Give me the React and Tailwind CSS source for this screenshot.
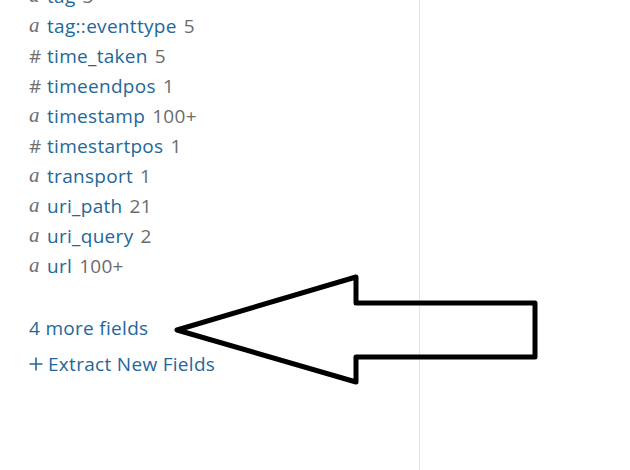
const fields = [
  { type: "a", name: "tag", count: "3" },
  { type: "a", name: "tag::eventtype", count: "5" },
  { type: "#", name: "time_taken", count: "5" },
  { type: "#", name: "timeendpos", count: "1" },
  { type: "a", name: "timestamp", count: "100+" },
  { type: "#", name: "timestartpos", count: "1" },
  { type: "a", name: "transport", count: "1" },
  { type: "a", name: "uri_path", count: "21" },
  { type: "a", name: "uri_query", count: "2" },
  { type: "a", name: "url", count: "100+" },
];

function TypeIcon({ type }) {
  if (type === "a") {
    return (
      <span className="inline-block w-[18px] text-[21px] italic text-[#6f6f6f] [font-family:'Liberation_Serif',serif]">
        a
      </span>
    );
  }
  return <span className="inline-block w-[18px] text-[#6f6f6f]">#</span>;
}

function Arrow() {
  return (
    <svg className="pointer-events-none absolute left-0 top-0" width="630" height="470">
      <polygon
        points="177,330 356,277 356,303 535,303 535,357 356,357 356,382"
        fill="none"
        stroke="#000"
        strokeWidth="5"
        strokeLinejoin="round"
      />
    </svg>
  );
}

export default function App() {
  return (
    <div className="relative h-[470px] w-[630px] overflow-hidden bg-white [font-family:'Open_Sans',sans-serif]">
      <div className="flex h-full">
        <div className="h-full w-[420px] border-r border-[#e3e3e3] pl-[29px]">
          <ul className="-mt-[19px] text-[19px] tracking-[0.3px]">
            {fields.map((f) => (
              <li key={f.name} className="flex h-[30px] items-center">
                <TypeIcon type={f.type} />
                <span className="text-[#23679a]">{f.name}</span>
                <span className="ml-[7px] text-[#6b6b6b]">{f.count}</span>
              </li>
            ))}
          </ul>
          <div className="mt-[33px] text-[19px] tracking-[0.3px] text-[#23679a]">4 more fields</div>
          <div className="mt-[7px] flex items-center text-[19px] tracking-[0.3px] text-[#23679a]">
            <svg width="14" height="14" viewBox="0 0 14 14" className="mr-[5px]">
              <path d="M7 0.5V13.5M0.5 7H13.5" stroke="#23679a" strokeWidth="1.6" />
            </svg>
            Extract New Fields
          </div>
        </div>
        <div className="flex-1" />
      </div>
      <Arrow />
    </div>
  );
}
